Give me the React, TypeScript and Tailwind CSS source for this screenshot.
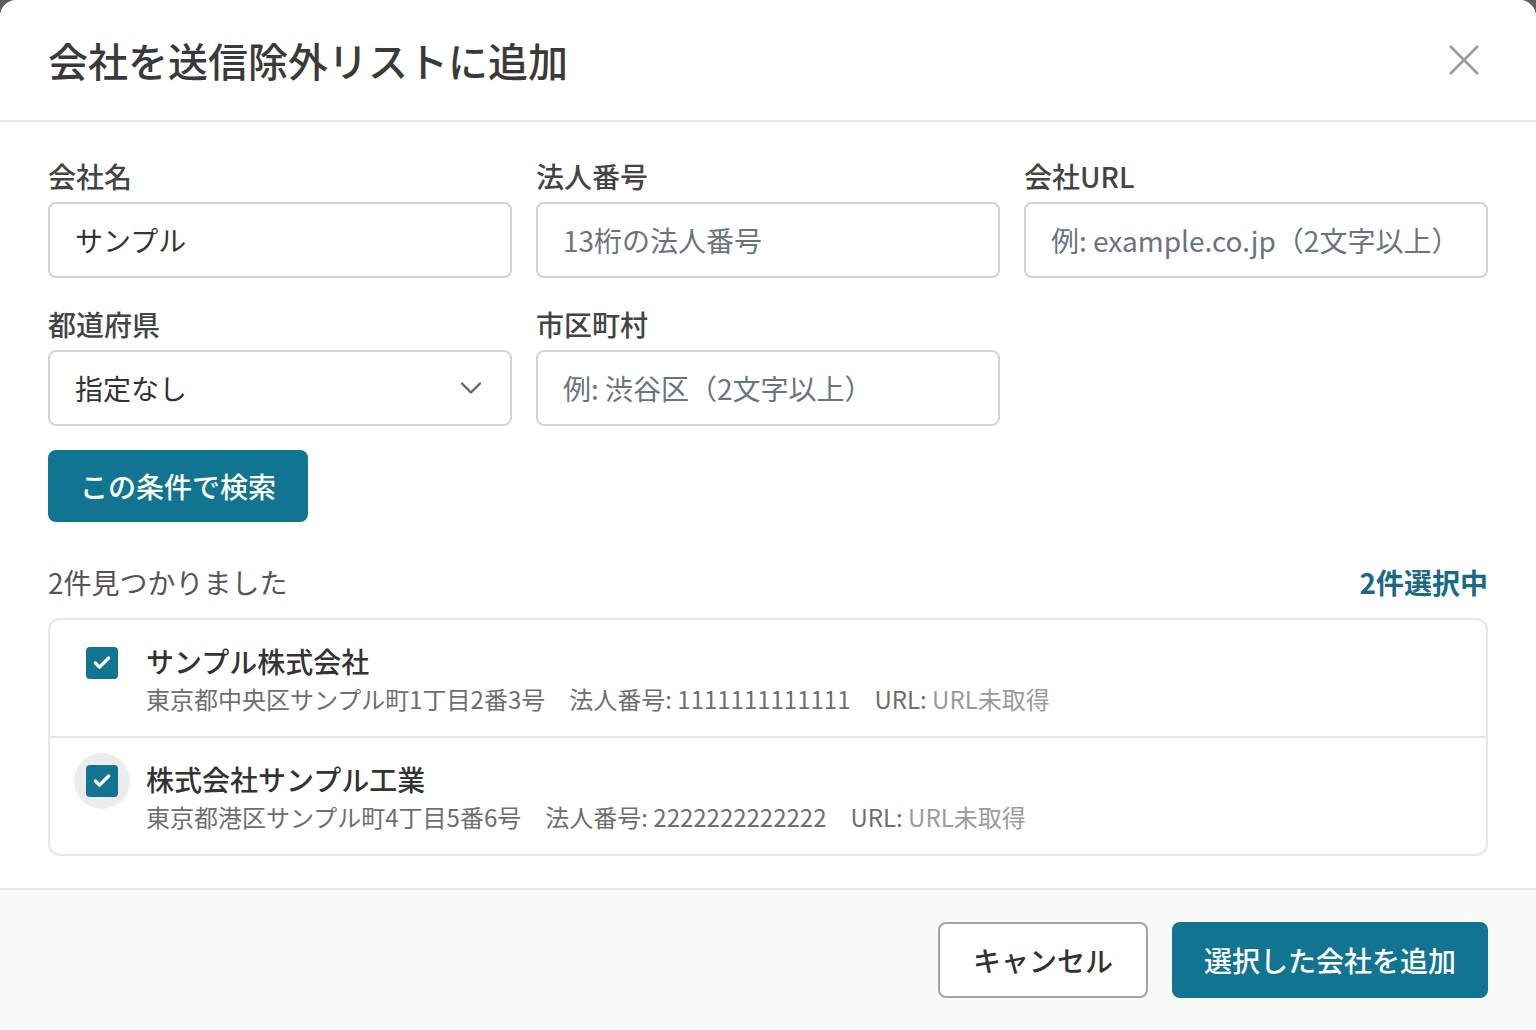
import { ChevronDown, Check } from 'lucide-react';

const companies = [
  {
    name: 'サンプル株式会社',
    address: '東京都中央区サンプル町1丁目2番3号',
    corpNo: '1111111111111',
    hover: false,
  },
  {
    name: '株式会社サンプル工業',
    address: '東京都港区サンプル町4丁目5番6号',
    corpNo: '2222222222222',
    hover: true,
  },
];

const font = { fontFamily: '"Noto Sans CJK JP", "Noto Sans", sans-serif' };

const Field = ({ label, children }: { label: string; children: React.ReactNode }) => (
  <div className="flex flex-col">
    <label className="text-[28px] leading-[36px] font-medium text-[#444] mb-[8px]">{label}</label>
    {children}
  </div>
);

const TextInput = ({ value, placeholder }: { value?: string; placeholder?: string }) => (
  <div className="h-[76px] rounded-lg border-2 border-[#d4d4d4] bg-white px-[25px] flex items-center text-[28px]">
    {value ? (
      <span className="text-[#333]">{value}</span>
    ) : (
      <span className="text-[#6b7280]">{placeholder}</span>
    )}
  </div>
);

export default function App() {
  return (
    <div className="h-[1030px] w-full bg-[#5e5e5e] overflow-hidden" style={font}>
      <div className="h-full bg-white rounded-t-2xl flex flex-col">
        {/* Header */}
        <div className="h-[122px] shrink-0 px-12 flex items-center justify-between border-b-2 border-[#e6e6ea]">
          <h1 className="text-[40px] font-medium text-[#3a3a3a]">会社を送信除外リストに追加</h1>
          <button className="w-10 h-10 mr-1 flex items-center justify-center">
            <svg width="30" height="30" viewBox="0 0 30 30" fill="none" stroke="#9a9a9a" strokeWidth="2.5">
              <path d="M1 1 L29 29 M29 1 L1 29" />
            </svg>
          </button>
        </div>

        {/* Body */}
        <div className="px-12 pt-[36px] pb-8">
          <div className="grid grid-cols-3 gap-x-6 gap-y-[28px]">
            <Field label="会社名">
              <TextInput value="サンプル" />
            </Field>
            <Field label="法人番号">
              <TextInput placeholder="13桁の法人番号" />
            </Field>
            <Field label="会社URL">
              <TextInput placeholder="例: example.co.jp（2文字以上）" />
            </Field>
            <Field label="都道府県">
              <div className="h-[76px] rounded-lg border-2 border-[#d4d4d4] bg-white pl-[25px] pr-[21px] flex items-center justify-between text-[28px] text-[#333]">
                <span>指定なし</span>
                <ChevronDown className="w-9 h-9 text-[#666]" strokeWidth={1.6} />
              </div>
            </Field>
            <Field label="市区町村">
              <TextInput placeholder="例: 渋谷区（2文字以上）" />
            </Field>
          </div>

          <button className="mt-6 h-[72px] px-8 rounded-lg bg-[#117490] text-white text-[28px] font-medium">
            この条件で検索
          </button>

          <div className="mt-10 mb-4 h-10 flex items-center justify-between">
            <span className="text-[28px] text-[#555]">2件見つかりました</span>
            <span className="text-[28px] font-semibold text-[#1a6a84]">2件選択中</span>
          </div>

          <div className="rounded-xl border-2 border-[#e6e6ea] divide-y-2 divide-[#e6e6ea]">
            {companies.map((c) => (
              <div key={c.corpNo} className="flex items-start pl-9 pt-[21px] pb-[19px]">
                <div className="relative mt-[6px] w-8 h-8 shrink-0">
                  {c.hover && <span className="absolute -inset-3 rounded-full bg-[#ececec]" />}
                  <span className="relative w-8 h-8 rounded-[4px] bg-[#117490] flex items-center justify-center">
                    <Check className="w-5 h-5 text-white" strokeWidth={4} />
                  </span>
                </div>
                <div className="ml-[28px] flex flex-col">
                  <span className="text-[28px] leading-[40px] font-medium text-[#333]">{c.name}</span>
                  <span className="text-[24px] leading-[36px] text-[#6e6e6e]">
                    {c.address}
                    <span className="ml-6">法人番号: {c.corpNo}</span>
                    <span className="ml-6">URL: </span>
                    <span className="text-[#9a9a9a]">URL未取得</span>
                  </span>
                </div>
              </div>
            ))}
          </div>
        </div>

        {/* Footer */}
        <div className="flex-1 border-t-2 border-[#e6e6ea] bg-[#f9f9f9] px-12 pt-8 flex justify-end items-start gap-6">
          <button className="h-[76px] px-[33px] rounded-lg border-2 border-[#a3a3a3] bg-white text-[28px] font-medium text-[#333]">
            キャンセル
          </button>
          <button className="h-[76px] px-8 rounded-lg bg-[#117490] text-white text-[28px] font-medium">
            選択した会社を追加
          </button>
        </div>
      </div>
    </div>
  );
}
